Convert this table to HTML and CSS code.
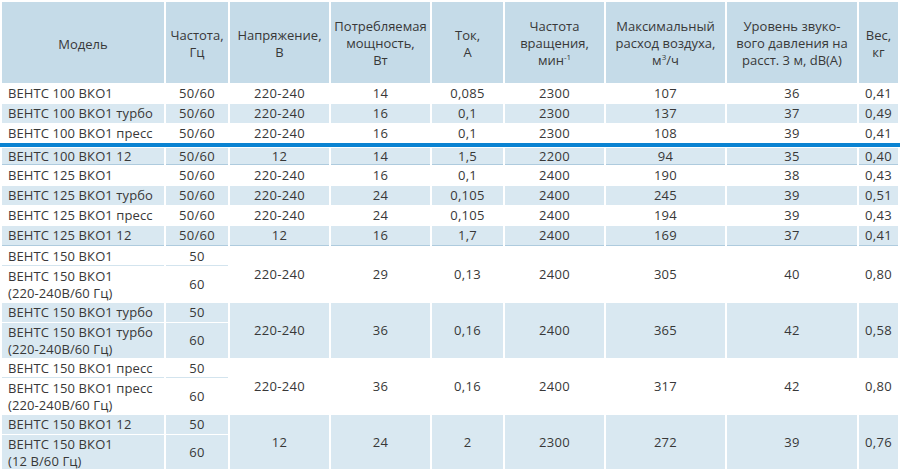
FILE: index.html
```html
<!DOCTYPE html>
<html lang="ru">
<head>
<meta charset="utf-8">
<title>ВЕНТС ВКО1</title>
<link rel="stylesheet" href="styles.css">
</head>
<body>
<div class="tbl">
  <div class="h"><span>Модель</span></div>
  <div class="h"><span>Частота,<br>Гц</span></div>
  <div class="h"><span>Напряжение,<br>В</span></div>
  <div class="h"><span>Потребляемая<br>мощность,<br>Вт</span></div>
  <div class="h"><span>Ток,<br>А</span></div>
  <div class="h"><span>Частота<br>вращения,<br>мин<sup>-1</sup></span></div>
  <div class="h"><span>Максимальный<br>расход воздуха,<br>м<sup>3</sup>/ч</span></div>
  <div class="h"><span>Уровень звуко-<br>вого давления на<br>расст. 3 м, dB(A)</span></div>
  <div class="h"><span>Вес,<br>кг</span></div>

  <div class="m">ВЕНТС 100 ВКО1</div><div class="c">50/60</div><div class="c">220-240</div><div class="c">14</div><div class="c">0,085</div><div class="c">2300</div><div class="c">107</div><div class="c">36</div><div class="c">0,41</div>
  <div class="m b">ВЕНТС 100 ВКО1 турбо</div><div class="c b">50/60</div><div class="c b">220-240</div><div class="c b">16</div><div class="c b">0,1</div><div class="c b">2300</div><div class="c b">137</div><div class="c b">37</div><div class="c b">0,49</div>
  <div class="m">ВЕНТС 100 ВКО1 пресс</div><div class="c">50/60</div><div class="c">220-240</div><div class="c">16</div><div class="c">0,1</div><div class="c">2300</div><div class="c">108</div><div class="c">39</div><div class="c">0,41</div>

  <div class="rule"></div>

  <div class="m b low end">ВЕНТС 100 ВКО1 12</div><div class="c b low end">50/60</div><div class="c b low end">12</div><div class="c b low end">14</div><div class="c b low end">1,5</div><div class="c b low end">2200</div><div class="c b low end">94</div><div class="c b low end">35</div><div class="c b low end">0,40</div>

  <div class="m">ВЕНТС 125 ВКО1</div><div class="c">50/60</div><div class="c">220-240</div><div class="c">16</div><div class="c">0,1</div><div class="c">2400</div><div class="c">190</div><div class="c">38</div><div class="c">0,43</div>
  <div class="m b">ВЕНТС 125 ВКО1 турбо</div><div class="c b">50/60</div><div class="c b">220-240</div><div class="c b">24</div><div class="c b">0,105</div><div class="c b">2400</div><div class="c b">245</div><div class="c b">39</div><div class="c b">0,51</div>
  <div class="m">ВЕНТС 125 ВКО1 пресс</div><div class="c">50/60</div><div class="c">220-240</div><div class="c">24</div><div class="c">0,105</div><div class="c">2400</div><div class="c">194</div><div class="c">39</div><div class="c">0,43</div>
  <div class="m b end">ВЕНТС 125 ВКО1 12</div><div class="c b end">50/60</div><div class="c b end">12</div><div class="c b end">16</div><div class="c b end">1,7</div><div class="c b end">2400</div><div class="c b end">169</div><div class="c b end">37</div><div class="c b end">0,41</div>

  <div class="m s1 line">ВЕНТС 150 ВКО1</div><div class="c s1 line">50</div>
  <div class="c sp">220-240</div><div class="c sp">29</div><div class="c sp">0,13</div><div class="c sp">2400</div><div class="c sp">305</div><div class="c sp">40</div><div class="c sp">0,80</div>
  <div class="m s2"><span>ВЕНТС 150 ВКО1<br>(220-240В/60 Гц)</span></div><div class="c s2">60</div>

  <div class="m b s1">ВЕНТС 150 ВКО1 турбо</div><div class="c b s1">50</div>
  <div class="c b sp">220-240</div><div class="c b sp">36</div><div class="c b sp">0,16</div><div class="c b sp">2400</div><div class="c b sp">365</div><div class="c b sp">42</div><div class="c b sp">0,58</div>
  <div class="m b s2"><span>ВЕНТС 150 ВКО1 турбо<br>(220-240В/60 Гц)</span></div><div class="c b s2">60</div>

  <div class="m s1 line">ВЕНТС 150 ВКО1 пресс</div><div class="c s1 line">50</div>
  <div class="c sp">220-240</div><div class="c sp">36</div><div class="c sp">0,16</div><div class="c sp">2400</div><div class="c sp">317</div><div class="c sp">42</div><div class="c sp">0,80</div>
  <div class="m s2"><span>ВЕНТС 150 ВКО1 пресс<br>(220-240В/60 Гц)</span></div><div class="c s2">60</div>

  <div class="m b s1">ВЕНТС 150 ВКО1 12</div><div class="c b s1">50</div>
  <div class="c b sp">12</div><div class="c b sp">24</div><div class="c b sp">2</div><div class="c b sp">2300</div><div class="c b sp">272</div><div class="c b sp">39</div><div class="c b sp">0,76</div>
  <div class="m b s2"><span>ВЕНТС 150 ВКО1<br>(12 В/60 Гц)</span></div><div class="c b s2">60</div>
</div>
</body>
</html>
```

FILE: styles.css
```css
html, body {
  margin: 0;
  padding: 0;
  background: #ffffff;
}

body {
  font-family: "Open Sans", "Liberation Sans", sans-serif;
  font-size: 13px;
  color: #383838;
}

.tbl {
  display: grid;
  grid-template-columns: 162px 62px 99px 99px 71px 99px 119px 130px 39px;
  column-gap: 2px;
  row-gap: 1px;
  padding: 2px 2px 0;
  width: 896px;
}

.h {
  background: #c5dbe8;
  height: 81px;
  display: flex;
  align-items: center;
  justify-content: center;
  text-align: center;
  line-height: 17px;
  padding-top: 2px;
  box-sizing: border-box;
}

.h:first-child {
  padding-top: 4px;
}

sup {
  font-size: 8px;
  line-height: 0;
  vertical-align: 5px;
}

.c, .m {
  height: 19px;
  line-height: 19px;
  display: flex;
  align-items: center;
  white-space: nowrap;
  letter-spacing: 0.3px;
}

.c {
  justify-content: center;
}

.m {
  justify-content: flex-start;
  padding-left: 6px;
  letter-spacing: 0.1px;
}

.b {
  background: #d9e8f1;
}

.low {
  height: 16px;
}

.end {
  border-bottom: 1px solid #aecbde;
}

.rule {
  grid-column: 1 / -1;
  height: 4px;
  margin: -1px -2px 0;
  background: #0a83d2;
}

.s1.line {
  height: 18px;
  border-bottom: 1px solid #d3e4ee;
}

.s2 {
  height: 35px;
  line-height: 17px;
}

.m.s2 {
  align-items: flex-start;
  padding-top: 1px;
  box-sizing: border-box;
}

.sp {
  grid-row: span 2;
  height: auto;
}
```
